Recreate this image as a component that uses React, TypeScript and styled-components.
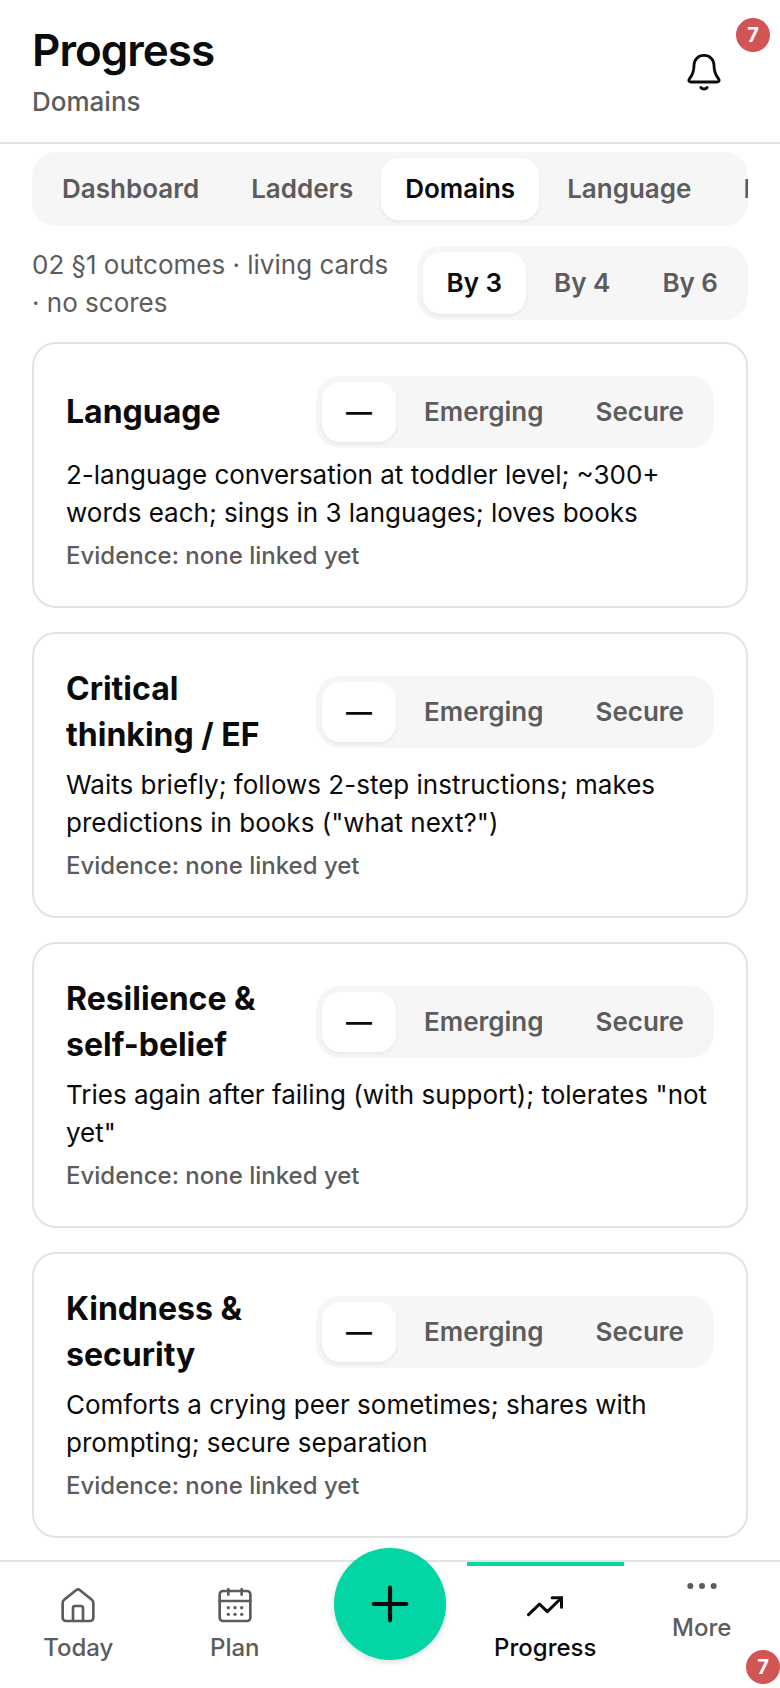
import React, { useState } from 'react';
import styled, { createGlobalStyle } from 'styled-components';

const GlobalStyle = createGlobalStyle`
  * { box-sizing: border-box; }
  body { margin: 0; background: #fff; }
  body, button { font-family: Inter, "Liberation Sans", sans-serif; }
  h1, h2, p { margin: 0; }
`;

const ink = '#0b0b0b';
const muted = '#5c5c5c';
const line = '#e3e3e3';
const mint = '#03d5a5';

const Screen = styled.div`
  min-height: 100vh;
  display: flex;
  flex-direction: column;
  background: #fff;
  color: ${ink};
`;

const Header = styled.header`
  position: relative;
  display: flex;
  align-items: center;
  justify-content: space-between;
  padding: 24px 32px 22px;
  border-bottom: 2px solid ${line};
`;

const Title = styled.h1`
  font-size: 44px;
  line-height: 52px;
  font-weight: 600;
  letter-spacing: -1px;
`;

const Subtitle = styled.p`
  padding-top: 8px;
  font-size: 26px;
  line-height: 36px;
  font-weight: 500;
  color: ${muted};
`;

const BellButton = styled.button`
  display: grid;
  place-items: center;
  width: 88px;
  height: 88px;
  padding: 0;
  border: 0;
  background: none;
  color: ${ink};
`;

const Badge = styled.span<{ $corner: 'top' | 'bottom' }>`
  position: absolute;
  ${(p) => (p.$corner === 'top' ? 'top: 18px; right: 10px;' : 'bottom: 4px; right: 0;')}
  width: 34px;
  height: 34px;
  border-radius: 17px;
  background: #d25555;
  color: #fff;
  font-size: 20px;
  line-height: 34px;
  font-weight: 700;
  text-align: center;
`;

const Content = styled.main`
  flex: 1;
  padding: 8px 32px 22px;
`;

const Segments = styled.div`
  display: flex;
  flex: none;
  gap: 4px;
  padding: 6px;
  overflow: hidden;
  border-radius: 24px;
  background: #f6f6f6;
`;

const Segment = styled.button<{ $active: boolean; $compact?: boolean }>`
  flex: none;
  height: ${(p) => (p.$compact ? 60 : 62)}px;
  padding: 0 24px;
  border: 0;
  border-radius: 18px;
  background: ${(p) => (p.$active ? '#fff' : 'transparent')};
  box-shadow: ${(p) => (p.$active ? '0 2px 4px rgba(0, 0, 0, 0.06)' : 'none')};
  color: ${(p) => (p.$active ? ink : muted)};
  font-size: 26px;
  line-height: 36px;
  font-weight: 600;
`;

const Toolbar = styled.div`
  display: flex;
  align-items: flex-start;
  justify-content: space-between;
  gap: 24px;
  padding: 20px 0;
`;

const Note = styled.p`
  font-size: 26px;
  line-height: 38px;
  color: ${muted};
`;

const Cards = styled.div`
  display: flex;
  flex-direction: column;
  gap: 24px;
`;

const Card = styled.article`
  padding: 32px;
  border: 2px solid ${line};
  border-radius: 24px;
`;

const CardHead = styled.div`
  display: flex;
  align-items: center;
  justify-content: space-between;
  gap: 24px;
`;

const CardTitle = styled.h2`
  font-size: 32px;
  line-height: 46px;
  font-weight: 700;
`;

const Outcome = styled.p`
  padding: 8px 0 6px;
  font-size: 26px;
  line-height: 38px;
`;

const Evidence = styled.p`
  font-size: 24px;
  line-height: 36px;
  font-weight: 500;
  color: ${muted};
`;

const TabBar = styled.nav`
  position: relative;
  display: grid;
  grid-template-columns: 1fr 1fr 154px 1fr 1fr;
  height: 128px;
  border-top: 2px solid ${line};
  background: #fff;
`;

const Tab = styled.a<{ $active?: boolean; $raised?: boolean }>`
  display: flex;
  flex-direction: column;
  align-items: center;
  gap: 4px;
  padding-top: ${(p) => (p.$raised ? 0 : 20)}px;
  border-top: 4px solid ${(p) => (p.$active ? mint : 'transparent')};
  color: ${(p) => (p.$active ? ink : muted)};
  font-size: 24px;
  line-height: 36px;
  font-weight: 500;
  text-decoration: none;
`;

const AddButton = styled.button`
  display: grid;
  place-items: center;
  justify-self: center;
  width: 112px;
  height: 112px;
  margin-top: -14px;
  padding: 0;
  border: 0;
  border-radius: 56px;
  background: ${mint};
  box-shadow: 0 2px 6px rgba(0, 0, 0, 0.14);
  color: ${ink};
`;

const Icon = ({ size = 40, width = 1.6, children }: { size?: number; width?: number; children: React.ReactNode }) => (
  <svg width={size} height={size} viewBox="0 0 24 24" fill="none" stroke="currentColor" strokeWidth={width}
    strokeLinecap="round" strokeLinejoin="round" aria-hidden="true">
    {children}
  </svg>
);

type SegmentedProps = { label: string; options: string[]; initial: string; compact?: boolean };

function Segmented({ label, options, initial, compact }: SegmentedProps) {
  const [value, setValue] = useState(initial);
  return (
    <Segments role="group" aria-label={label}>
      {options.map((o) => (
        <Segment key={o} type="button" $active={o === value} $compact={compact} aria-pressed={o === value} onClick={() => setValue(o)}>
          {o}
        </Segment>
      ))}
    </Segments>
  );
}

const domains = [
  { title: 'Language', outcome: '2-language conversation at toddler level; ~300+ words each; sings in 3 languages; loves books' },
  { title: 'Critical thinking / EF', outcome: 'Waits briefly; follows 2-step instructions; makes predictions in books ("what next?")' },
  { title: 'Resilience & self-belief', outcome: 'Tries again after failing (with support); tolerates "not yet"' },
  { title: 'Kindness & security', outcome: 'Comforts a crying peer sometimes; shares with prompting; secure separation' },
];

export default function App() {
  return (
    <Screen>
      <GlobalStyle />
      <Header>
        <div>
          <Title>Progress</Title>
          <Subtitle>Domains</Subtitle>
        </div>
        <BellButton type="button" aria-label="Notifications">
          <Icon width={1.7}>
            <path d="M12 2c-3.5 0-6 2.6-6 6 0 4-.9 5.900-2.600 7.900-.9 1.100-.6 2.100.7 2.100h15.800c1.300 0 1.600-1 .7-2.100C18.900 13.900 18 12 18 8c0-3.400-2.500-6-6-6Z" />
            <path d="M10.100 21.300c1 1.200 2.800 1.200 3.800 0" width="2" />
          </Icon>
        </BellButton>
        <Badge $corner="top">7</Badge>
      </Header>
      <Content>
        <Segmented label="Section" options={['Dashboard', 'Ladders', 'Domains', 'Language', 'Insights']} initial="Domains" />
        <Toolbar>
          <Note>02 §1 outcomes · living cards · no scores</Note>
          <Segmented label="Age" options={['By 3', 'By 4', 'By 6']} initial="By 3" />
        </Toolbar>
        <Cards>
          {domains.map((d) => (
            <Card key={d.title}>
              <CardHead>
                <CardTitle>{d.title}</CardTitle>
                <Segmented compact label={`${d.title} status`} options={['—', 'Emerging', 'Secure']} initial="—" />
              </CardHead>
              <Outcome>{d.outcome}</Outcome>
              <Evidence>Evidence: none linked yet</Evidence>
            </Card>
          ))}
        </Cards>
      </Content>
      <TabBar aria-label="Main">
        <Tab href="#today">
          <Icon>
            <path d="M2.8 10.2c0-.8.3-1.4.9-1.9l7.5-6q.8-.6 1.6 0l7.5 6c.6.5.9 1.1.9 1.9V19a2 2 0 0 1-2 2H4.8a2 2 0 0 1-2-2Z" />
            <path d="M9 21v-7.800a1.200 1.200 0 0 1 1.200-1.200h3.600a1.200 1.200 0 0 1 1.200 1.200V21" />
          </Icon>
          Today
        </Tab>
        <Tab href="#plan">
          <Icon>
            <rect x="2.8" y="3" width="18.4" height="18" rx="2" />
            <path d="M2.8 9h18.4M8 1.900v3.300M16 1.900v3.300" />
            <g fill="currentColor" stroke="none">
              <circle cx="8" cy="13" r="1" /><circle cx="12" cy="13" r="1" /><circle cx="16" cy="13" r="1" />
              <circle cx="8" cy="17" r="1" /><circle cx="12" cy="17" r="1" /><circle cx="16" cy="17" r="1" />
            </g>
          </Icon>
          Plan
        </Tab>
        <AddButton type="button" aria-label="Add"><Icon size={56} width={1.8}><path d="M5 12h14M12 5v14" /></Icon></AddButton>
        <Tab href="#progress" $active aria-current="page">
          <Icon width={1.8}>
            <path d="M2.100 17.200 8.700 10.900l4.700 4.500L21.800 7.200" />
            <path d="M16.300 7h5.600v5.700" strokeLinejoin="miter" />
          </Icon>
          Progress
        </Tab>
        <Tab href="#more" $raised>
          <Icon><g fill="currentColor"><circle cx="5" cy="12" r="1" /><circle cx="12" cy="12" r="1" /><circle cx="19" cy="12" r="1" /></g></Icon>
          More
        </Tab>
        <Badge $corner="bottom">7</Badge>
      </TabBar>
    </Screen>
  );
}
